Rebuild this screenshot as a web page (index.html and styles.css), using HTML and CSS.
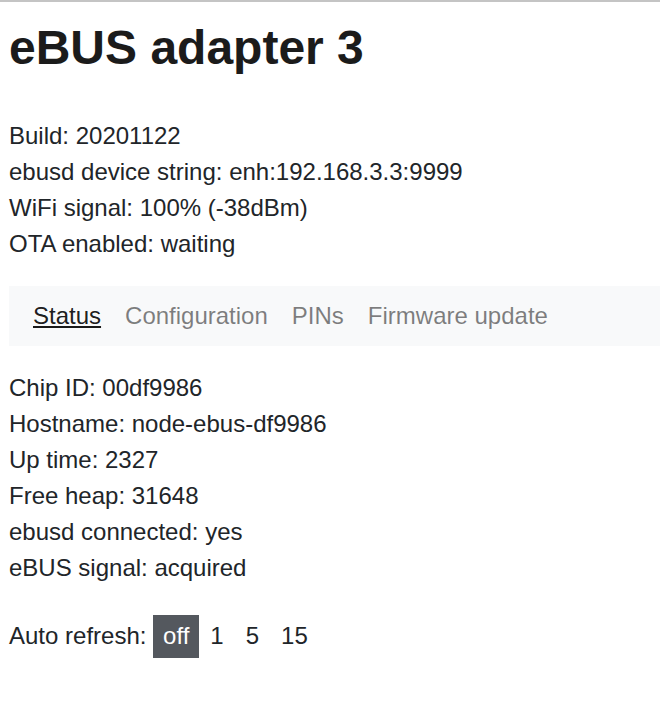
FILE: index.html
```html
<!DOCTYPE html>
<html lang="en">
<head>
<meta charset="utf-8">
<title>eBUS adapter 3</title>
<link rel="stylesheet" href="styles.css">
</head>
<body>
<div class="page">
  <h1 class="title">eBUS adapter 3</h1>
  <div class="info">
    <div class="line">Build: 20201122</div>
    <div class="line">ebusd device string: enh:192.168.3.3:9999</div>
    <div class="line">WiFi signal: 100% (-38dBm)</div>
    <div class="line">OTA enabled: waiting</div>
  </div>
  <nav class="navbar">
    <a class="nav-link active" href="#">Status</a>
    <a class="nav-link" href="#">Configuration</a>
    <a class="nav-link" href="#">PINs</a>
    <a class="nav-link" href="#">Firmware update</a>
  </nav>
  <div class="status">
    <div class="line">Chip ID: 00df9986</div>
    <div class="line">Hostname: node-ebus-df9986</div>
    <div class="line">Up time: 2327</div>
    <div class="line">Free heap: 31648</div>
    <div class="line">ebusd connected: yes</div>
    <div class="line">eBUS signal: acquired</div>
  </div>
  <div class="refresh">
    <span class="refresh-label">Auto refresh:</span>
    <a class="refresh-opt selected" href="#">off</a>
    <a class="refresh-opt" href="#">1</a>
    <a class="refresh-opt" href="#">5</a>
    <a class="refresh-opt" href="#">15</a>
  </div>
</div>
</body>
</html>
```
FILE: styles.css
```css
html, body {
  margin: 0;
  padding: 0;
  background: #ffffff;
}
body {
  border-top: 2px solid #c4c4c4;
  font-family: "Liberation Sans", Arial, sans-serif;
  font-size: 24px;
  line-height: 36px;
  color: #212529;
}
.page {
  padding-left: 9px;
}
.title {
  margin: 17px 0 0;
  font-size: 48px;
  line-height: 57.6px;
  font-weight: 700;
  color: #1b1b1b;
}
.info {
  margin-top: 41px;
}
.line {
  height: 36px;
  white-space: nowrap;
}
.navbar {
  margin-top: 24px;
  height: 60px;
  box-sizing: border-box;
  padding: 12px 12px;
  background: #f8f9fa;
  display: flex;
}
.nav-link {
  padding: 0 12px;
  color: rgba(0, 0, 0, 0.5);
  text-decoration: none;
  white-space: nowrap;
}
.nav-link.active {
  color: rgba(0, 0, 0, 0.9);
  text-decoration: underline;
}
.status {
  margin-top: 24px;
}
.refresh {
  margin-top: 29.4px;
  height: 43px;
  display: flex;
  align-items: center;
}
.refresh-label {
  margin-right: 6.7px;
}
.refresh-opt {
  padding: 3.5px 11px;
  color: #212529;
  text-decoration: none;
}
.refresh-opt.selected {
  padding: 3.5px 10px;
  background: #54585e;
  color: #ffffff;
}
```
